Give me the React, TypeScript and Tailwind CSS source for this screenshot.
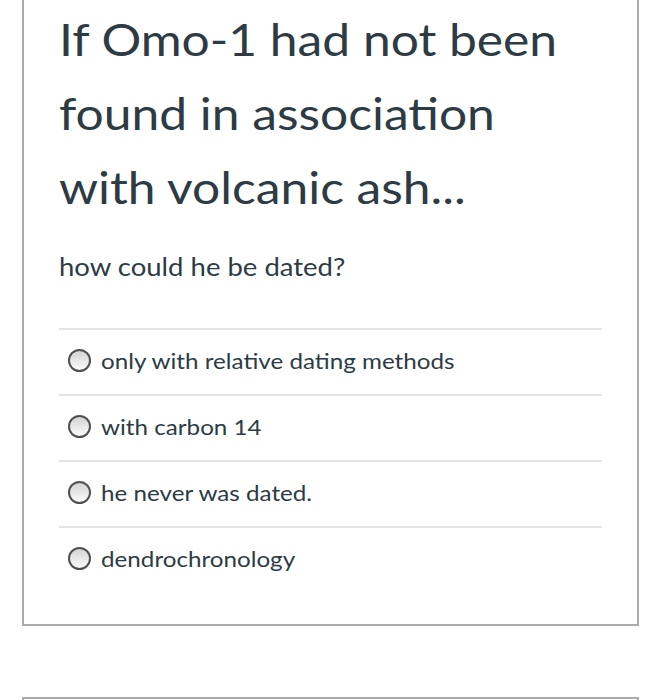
import React from "react";

const options = [
  "only with relative dating methods",
  "with carbon 14",
  "he never was dated.",
  "dendrochronology",
];

export default function App() {
  return (
    <div className="min-h-screen bg-white font-['Lato','Liberation_Sans',sans-serif] text-[#2d3b45] overflow-hidden">
      <div className="ml-[22px] w-[617px] border-x-2 border-b-2 border-[#ababab] px-[35px] pt-[2px] pb-[32px]">
        <h1 className="origin-left scale-x-[1.105] text-[45px] leading-[74px] font-normal">
          If Omo-1 had not been
          <br />
          found in association
          <br />
          with volcanic ash...
        </h1>
        <p className="mt-[26px] origin-left scale-x-[1.1] text-[25px] leading-[32px]">how could he be dated?</p>
        <div className="mt-[46px]">
          {options.map((o) => (
            <div
              key={o}
              className="flex h-[66px] items-center gap-[10px] border-t-2 border-[#e4e4e4] pb-[3px] pl-[9px]"
            >
              <span className="block h-[23px] w-[23px] shrink-0 rounded-full border-2 border-[#505050] bg-gradient-to-b from-[#d4d4d4] to-[#fbfbfb]" />
              <span className="inline-block origin-left scale-x-[1.1] text-[22px] leading-[26px]">{o}</span>
            </div>
          ))}
        </div>
      </div>
      <div className="ml-[22px] mt-[71px] h-[40px] w-[617px] border-x-2 border-t-2 border-[#ababab]" />
    </div>
  );
}
